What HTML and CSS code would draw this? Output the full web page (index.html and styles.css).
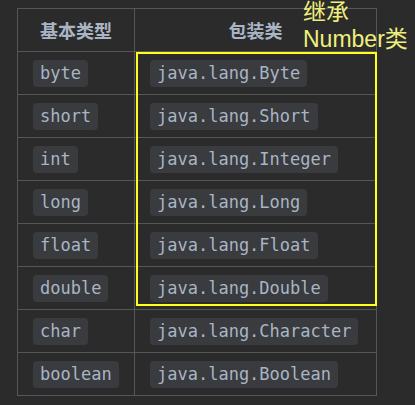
FILE: index.html
```html
<!DOCTYPE html>
<html>
<head>
<meta charset="utf-8">
<link rel="stylesheet" href="styles.css">
</head>
<body>
<div class="wrap">
  <table class="types">
    <colgroup><col class="c1"><col class="c2"></colgroup>
    <thead>
      <tr><th>基本类型</th><th>包装类</th></tr>
    </thead>
    <tbody>
      <tr><td><code>byte</code></td><td><code>java.lang.Byte</code></td></tr>
      <tr><td><code>short</code></td><td><code>java.lang.Short</code></td></tr>
      <tr><td><code>int</code></td><td><code>java.lang.Integer</code></td></tr>
      <tr><td><code>long</code></td><td><code>java.lang.Long</code></td></tr>
      <tr><td><code>float</code></td><td><code>java.lang.Float</code></td></tr>
      <tr><td><code>double</code></td><td><code>java.lang.Double</code></td></tr>
      <tr><td><code>char</code></td><td><code>java.lang.Character</code></td></tr>
      <tr><td><code>boolean</code></td><td><code>java.lang.Boolean</code></td></tr>
    </tbody>
  </table>
  <div class="highlight"></div>
  <div class="note">继承<br>Number类</div>
</div>
</body>
</html>
```

FILE: styles.css
```css
html, body {
  margin: 0;
  padding: 0;
  background: #2b2b2b;
}
.wrap {
  position: relative;
  width: 415px;
  height: 405px;
  padding: 8px 0 0 17px;
  box-sizing: border-box;
}
.types {
  border-collapse: collapse;
  table-layout: fixed;
  width: 359px;
}
.c1 { width: 117px; }
.c2 { width: 242px; }
.types th, .types td {
  border: 1px solid #555657;
  height: 43px;
  padding: 0 15px;
  vertical-align: middle;
  box-sizing: border-box;
}
.types th {
  font-family: "Noto Sans CJK SC", "Noto Sans", sans-serif;
  font-weight: bold;
  font-size: 18px;
  color: #a9b5c4;
  text-align: center;
}
.types td {
  text-align: left;
}
code {
  display: inline-block;
  font-family: "DejaVu Sans Mono", monospace;
  font-size: 17px;
  line-height: 27px;
  padding: 0 7px;
  border-radius: 4px;
  background: #393b3e;
  color: #a9b5c4;
  vertical-align: middle;
}
.highlight {
  position: absolute;
  left: 136px;
  top: 52px;
  width: 241px;
  height: 254px;
  box-sizing: border-box;
  border: 2px solid #ffff1a;
}
.note {
  position: absolute;
  left: 303px;
  top: -1px;
  font-family: "Liberation Sans", "Noto Sans CJK SC", sans-serif;
  font-size: 23px;
  line-height: 27px;
  color: #f0ef7c;
}
```
